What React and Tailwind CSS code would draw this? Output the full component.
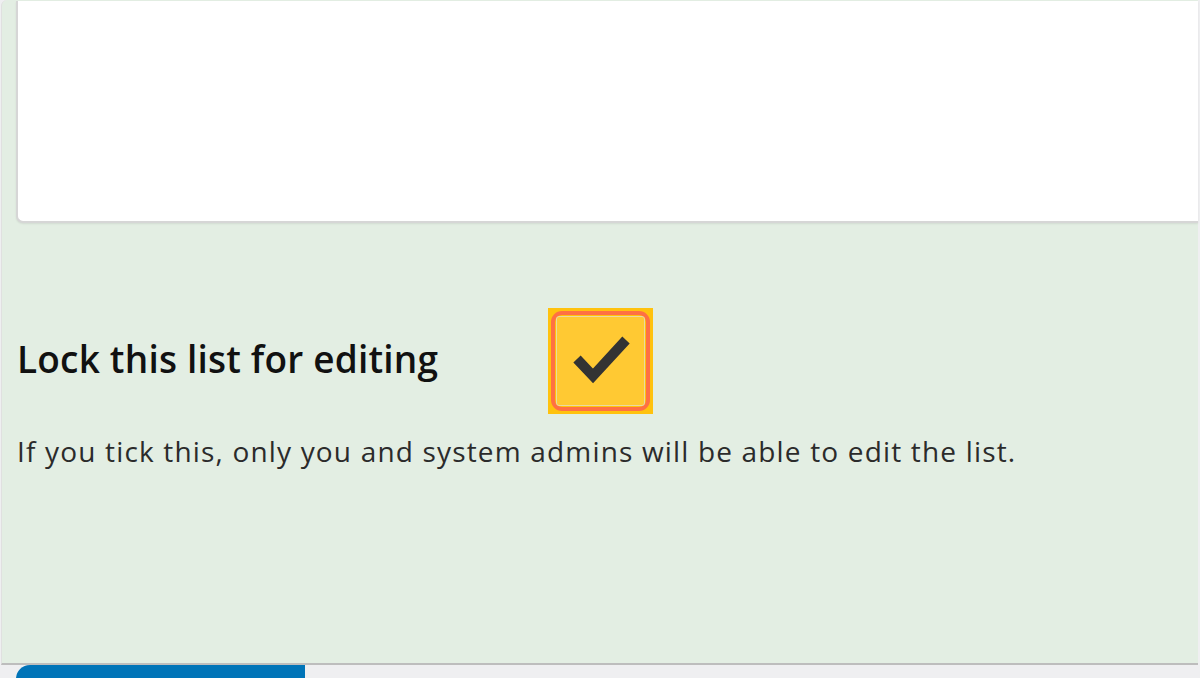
import React from 'react';

function CheckBox() {
  return (
    <div className="w-[105px] h-[106px] bg-[#ffc20e] p-[3px]">
      <div className="w-full h-full rounded-[11px] border-[4px] border-[#ff7043] p-[1px]">
        <div className="w-full h-full bg-[#ffc933] border border-[#e9d9a3] rounded-[3px] flex items-center justify-center">
          <svg width="62" height="56" viewBox="0 0 62 56">
            <polyline points="7,26 23,43 56,7" fill="none" stroke="#333333" strokeWidth="10" strokeLinejoin="miter" />
          </svg>
        </div>
      </div>
    </div>
  );
}

export default function App() {
  return (
    <div className="h-[678px] w-[1200px] overflow-hidden bg-[#efeff1] flex flex-col" style={{ fontFamily: '"Open Sans", sans-serif' }}>
      <div className="h-[665px] shrink-0 ml-[1px] mr-[2px] bg-[#e3eee3] rounded-tl-[6px] border-l border-[#e0e0e0] border-b-2 border-b-[#bdbdbd] pl-[14px]">
        <div className="h-[222px] bg-white rounded-bl-[7px] border-l-2 border-b-2 border-[#d6d6d6] mt-[1px] shadow-[0_1px_2px_rgba(0,0,0,0.08)]"></div>

        <div className="flex items-center mt-[85px]">
          <h2 className="w-[532px] pl-[1px] pb-[5px] text-[37px] font-semibold text-[#111111] tracking-[0.2px]">Lock this list for editing</h2>
          <CheckBox />
        </div>

        <p className="mt-[19px] pl-[1px] text-[28px] text-[#2b2b2b] leading-[36px] tracking-[1.17px]">
          If you tick this, only you and system admins will be able to edit the list.
        </p>
      </div>
      <div className="flex">
        <div className="ml-[16px] w-[289px] h-[20px] bg-[#0074b8] rounded-tl-[14px]"></div>
      </div>
    </div>
  );
}
